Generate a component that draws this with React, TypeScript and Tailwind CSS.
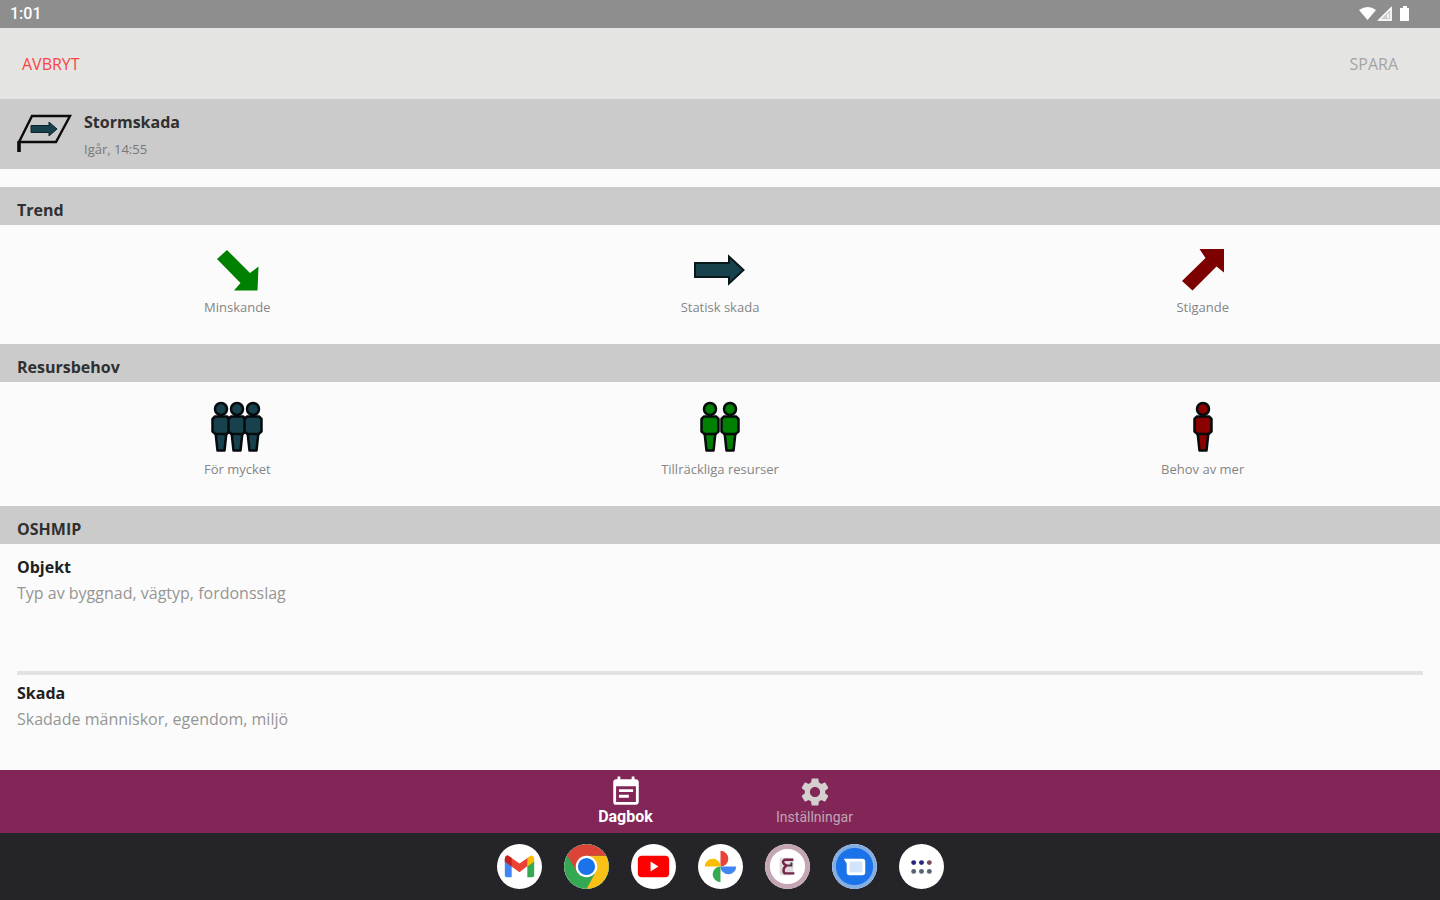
import { ReactNode } from "react";
import { MdEventNote, MdSettings } from "react-icons/md";

type Choice = { label: string; icon: ReactNode }

const Arrow = ({ fill, stroke }: { fill: string; stroke: string }) => (
  <svg viewBox="0 0 54 34" className="w-[54px] h-[34px]" aria-hidden="true">
    <path d="M2 10H36V3.500L50.500 17L36 30.500V24H2Z" fill={fill} stroke={stroke} strokeWidth="2" />
  </svg>
)

const DiagonalArrow = ({ fill, up }: { fill: string; up?: boolean }) => (
  <svg viewBox="0 0 44 44" className="w-11 h-11" aria-hidden="true">
    <path
      d={up
        ? "M1 33L24.500 10L18.500 1H43V24.500L35.500 18.500L11.500 42.500Z"
        : "M2 11L12 2L35 25L43.500 18.500L42.500 42.500H19L25.500 35Z"}
      fill={fill}
    />
  </svg>
)

const Person = ({ x, fill }: { x: number; fill: string }) => (
  <g transform={`translate(${x} 0)`} fill={fill} stroke="#050b0c" strokeWidth="2.500" strokeLinejoin="round">
    <path d="M4.500 31L6.500 49.500H13.500L15.500 31Z" />
    <path d="M4 15.500H16L18.500 18V30.500L15.500 33H4.500L1.500 30.500V18Z" />
    <circle cx="10" cy="8" r="6" />
  </g>
)

const People = ({ count, gap, fill }: { count: number; gap: number; fill: string }) => {
  const width = 20 + (count - 1) * gap
  return (
    <svg viewBox={`0 0 ${width} 52`} width={width} height="52" aria-hidden="true">
      {Array.from({ length: count }, (_, i) => <Person key={i} x={i * gap} fill={fill} />)}
    </svg>
  )
}

const trends: Choice[] = [
  { label: "Minskande", icon: <DiagonalArrow fill="#008000" /> },
  { label: "Statisk skada", icon: <Arrow fill="#17414c" stroke="#0a171b" /> },
  { label: "Stigande", icon: <DiagonalArrow fill="#7d0000" up /> },
]

const resources: Choice[] = [
  { label: "För mycket", icon: <People count={3} gap={16} fill="#17414c" /> },
  { label: "Tillräckliga resurser", icon: <People count={2} gap={20} fill="#008000" /> },
  { label: "Behov av mer", icon: <People count={1} gap={20} fill="#8b0000" /> },
]

const SectionTitle = ({ children }: { children: ReactNode }) => (
  <h2 className="h-[38px] shrink-0 flex items-center px-[17px] pt-2 bg-[#cbcbcb] text-base font-bold text-[#303030]">{children}</h2>
)

const Choices = ({ items, className }: { items: Choice[]; className: string }) => (
  <div className={`grid grid-cols-3 gap-x-2 shrink-0 pt-[18px] ${className}`}>
    {items.map((item) => (
      <button key={item.label} type="button" className="flex flex-col items-center text-[13px] leading-4 text-[#858585]">
        <span className="flex-1 flex items-start">
          <span className="h-[54px] flex items-center">{item.icon}</span>
        </span>
        {item.label}
      </button>
    ))}
  </div>
)

const Field = ({ id, label, placeholder }: { id: string; label: string; placeholder: string }) => (
  <div className="mx-[17px] pt-2 shrink-0 flex flex-col border-b-4 border-[#e2e2e2]">
    <label htmlFor={id} className="text-base leading-5 font-bold text-[#202020]">{label}</label>
    <textarea
      id={id}
      placeholder={placeholder}
      className="h-[94px] pt-1 block w-full resize-none outline-none bg-transparent text-base leading-6 placeholder:text-[#959595]"
    />
  </div>
)

const Gmail = () => (
  <svg viewBox="0 0 46 46" className="w-full h-full">
    <path d="M8 16V32Q8 34 10 34H15V21Z" fill="#4285f4" />
    <path d="M31 21V34H36Q38 34 38 32V16Z" fill="#34a853" />
    <path d="M8 15Q9 10 13 13L23 20L33 13V21L23 29L8 18Z" fill="#ea4335" />
    <path d="M8 15V18L15 23V14L13 13Q9 10 8 15Z" fill="#c5221f" />
    <path d="M31 14L33 13Q37 10 38 15V18L31 23Z" fill="#fbbc04" />
  </svg>
)

const Chrome = () => (
  <svg viewBox="0 0 46 46" className="w-full h-full">
    <circle cx="23" cy="23" r="23" fill="#34a853" />
    <path d="M23 12H43A23 23 0 0 1 23 46L32.500 28.500Z" fill="#fbc116" />
    <path d="M3.100 11.500A23 23 0 0 1 43 12H23L13.500 28.500Z" fill="#db4437" />
    <circle cx="23" cy="23" r="11" fill="#fff" />
    <circle cx="23" cy="23" r="8.800" fill="#1a73e8" />
  </svg>
)

const Youtube = () => (
  <svg viewBox="0 0 46 46" className="w-full h-full">
    <rect x="7" y="12" width="32" height="22" rx="4" fill="#f00" />
    <path d="M20 18V28L28 23Z" fill="#fff" />
  </svg>
)

const Photos = () => (
  <svg viewBox="0 0 46 46" className="w-full h-full">
    <path d="M23 7A8 8 0 0 1 23 23Z" fill="#ea4335" />
    <path d="M39 23A8 8 0 0 1 23 23Z" fill="#4285f4" />
    <path d="M23 39A8 8 0 0 1 23 23Z" fill="#34a853" />
    <path d="M7 23A8 8 0 0 1 23 23Z" fill="#fbbc04" />
  </svg>
)

const Diary = () => (
  <svg viewBox="0 0 46 46" className="w-full h-full">
    <circle cx="23" cy="23" r="20.500" fill="#fff" stroke="#c4a5b4" strokeWidth="5" />
    <rect x="15" y="14" width="14" height="18" rx="2" fill="#ded9db" />
    <path d="M29 16H20Q16 19 22 22Q17 26 20 30H30" fill="none" stroke="#762448" strokeWidth="2.500" />
    <path d="M23 22H27V19" fill="none" stroke="#4d3540" strokeWidth="2" />
  </svg>
)

const Messages = () => (
  <svg viewBox="0 0 46 46" className="w-full h-full">
    <circle cx="23" cy="23" r="21" fill="#1a73e8" stroke="#82aee5" strokeWidth="4" />
    <path d="M12 15H31Q34 15 34 18V29Q34 32 31 32H18Q15 32 15 29V20Z" fill="#fff" />
    <rect x="18" y="18" width="13" height="11" fill="#d2e3fc" />
  </svg>
)

const AllApps = () => (
  <svg viewBox="0 0 46 46" className="w-full h-full">
    {[15, 23, 31].map((x) => (
      <g key={x}>
        <circle cx={x} cy="19" r="2.500" fill={x === 31 ? "#79465e" : "#25257a"} />
        <circle cx={x} cy="28" r="2.500" fill="#596273" />
      </g>
    ))}
  </svg>
)

const apps = [
  { name: "Gmail", icon: <Gmail /> },
  { name: "Chrome", icon: <Chrome /> },
  { name: "YouTube", icon: <Youtube /> },
  { name: "Foto", icon: <Photos /> },
  { name: "Dagbok", icon: <Diary /> },
  { name: "Messages", icon: <Messages /> },
  { name: "Alla appar", icon: <AllApps /> },
]

const App = () => {
  return (
    <div className="h-screen flex flex-col overflow-hidden bg-[#fbfbfb] font-['Open_Sans','Noto_Sans',sans-serif]">
      {/* status bar */}
      <div className="h-7 shrink-0 pl-[10px] pr-[29px] flex items-center justify-between bg-[#8e8e8e] text-white">
        <span className="text-base font-medium font-['Roboto',sans-serif]">1:01</span>
        <svg viewBox="0 0 52 16" className="w-[52px] h-4" fill="#fff" aria-hidden="true">
          <path d="M0 4Q9 -2 17 4L8.500 14Z" />
          <path d="M33 1V15H19Z" fillOpacity="0.550" />
          <path d="M32 2V14H20ZM29 8V12" fill="none" stroke="#fff" strokeWidth="1.500" />
          <path d="M42 2H44V0H48V2H50V15H41V2Z" />
        </svg>
      </div>

      <header className="h-[71px] shrink-0 pl-[22px] pr-[42px] flex items-center justify-between bg-[#e4e4e2] text-base">
        <button type="button" className="text-[#fa4545]">AVBRYT</button>
        <button type="button" className="text-[#a4a4a3]">SPARA</button>
      </header>

      <div className="h-[70px] shrink-0 pl-4 flex gap-3 bg-[#cbcbcb]">
        <svg viewBox="0 0 56 42" className="mt-[14px] w-14 h-[42px]" aria-hidden="true">
          <path d="M3 39V29L16 3H54L40 29H3" fill="none" stroke="#0b0b0b" strokeWidth="2.400" />
          <path d="M3 28V39" stroke="#0b0b0b" strokeWidth="3.500" />
          <path d="M15 12.500H33V9L41 16L33 23V19.500H15Z" fill="#17414c" stroke="#0a242b" />
        </svg>
        <div className="pt-[11px] flex flex-col gap-[3px]">
          <h1 className="text-base leading-6 font-bold text-[#303030]">Stormskada</h1>
          <p className="text-[13px] leading-6 text-[#777]">Igår, 14:55</p>
        </div>
      </div>

      <main className="flex-1 min-h-0 pt-[18px] flex flex-col overflow-hidden">
        <SectionTitle>Trend</SectionTitle>
        <Choices items={trends} className="h-[119px] pb-[29px]" />
        <SectionTitle>Resursbehov</SectionTitle>
        <Choices items={resources} className="h-[124px] pb-[29px]" />
        <SectionTitle>OSHMIP</SectionTitle>
        <div className="pt-[5px] flex flex-col">
          <Field id="objekt" label="Objekt" placeholder="Typ av byggnad, vägtyp, fordonsslag" />
          <Field id="skada" label="Skada" placeholder="Skadade människor, egendom, miljö" />
        </div>
      </main>

      <nav className="h-[63px] shrink-0 flex justify-center bg-[#822657] leading-4 font-['Roboto',sans-serif]">
        <a href="#dagbok" className="w-[189px] pt-[5px] flex flex-col items-center text-base leading-4 font-bold text-white">
          <MdEventNote className="w-[34px] h-[34px]" />
          Dagbok
        </a>
        <a href="#installningar" className="w-[189px] pt-[5px] flex flex-col items-center text-sm leading-4 text-[#c0a4b4]">
          <MdSettings className="w-[34px] h-[34px] text-[#d3d0cf]" />
          Inställningar
        </a>
      </nav>

      {/* dock */}
      <footer className="h-[67px] shrink-0 flex items-center justify-center gap-[22px] bg-[#252529]">
        {apps.map((app) => (
          <button key={app.name} type="button" aria-label={app.name} className="w-[45px] h-[45px] rounded-full overflow-hidden bg-white">
            {app.icon}
          </button>
        ))}
      </footer>
    </div>
  )
}

export default App
